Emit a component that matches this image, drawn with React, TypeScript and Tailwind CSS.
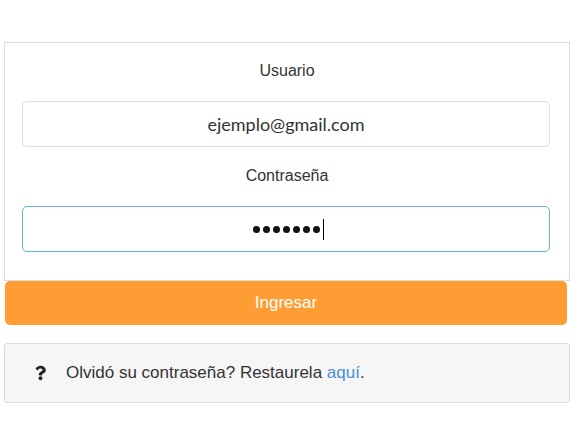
import { FaQuestion } from "react-icons/fa";

export default function App() {
  const dots = [0, 1, 2, 3, 4, 5, 6];
  return (
    <div className="min-h-[431px] bg-white pt-[42px] pl-[4px] w-[575px] font-['Liberation_Sans',Arial,sans-serif] text-[#333]">
      <div className="w-[566px]">
        <div className="border border-[#dcdcdc] px-[17px] pt-[18px] pb-[28px]">
          <div className="text-center text-[16px] leading-[20px]">Usuario</div>
          <input
            readOnly
            value="ejemplo@gmail.com"
            className="mt-[20px] block w-[528px] h-[46px] rounded-[5px] border border-[#dddddd] bg-white text-center text-[18px] text-[#333] font-['Lato',sans-serif] outline-none"
          />
          <div className="mt-[19px] text-center text-[16px] leading-[20px]">Contraseña</div>
          <div className="mt-[20px] flex h-[46px] w-[528px] items-center justify-center rounded-[5px] border border-[#6aaedf] bg-white">
            <div className="flex gap-[3px] pl-[4px]">
              {dots.map((d) => (
                <span key={d} className="h-[7px] w-[7px] rounded-full bg-[#111]" />
              ))}
            </div>
            <span className="ml-[3px] h-[21px] w-[1px] bg-black" />
          </div>
        </div>
        <button className="ml-[1px] block h-[44px] w-[562px] rounded-[5px] bg-[#fe9d33] text-[17px] text-white">
          Ingresar
        </button>
        <div className="mt-[18px] flex h-[60px] items-center rounded-[3px] border border-[#dcdcdc] bg-[#f6f6f6] pl-[30px] text-[17px]">
          <FaQuestion className="text-[#222] w-[11px] h-[16px]" />
          <span className="ml-[20px]">
            Olvidó su contraseña? Restaurela <a className="text-[#4a8fd4]">aquí</a>.
          </span>
        </div>
      </div>
    </div>
  );
}
